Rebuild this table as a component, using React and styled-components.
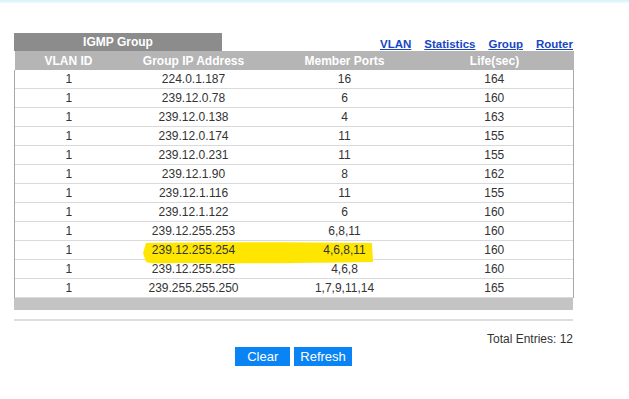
import React from 'react'
import styled, { createGlobalStyle } from 'styled-components'

const GlobalStyle = createGlobalStyle`
  html, body {
    margin: 0;
    padding: 0;
    background: #ffffff;
    font-family: "Liberation Sans", Arial, sans-serif;
  }
`

const groups = [
  ['1', '224.0.1.187', '16', '164'],
  ['1', '239.12.0.78', '6', '160'],
  ['1', '239.12.0.138', '4', '163'],
  ['1', '239.12.0.174', '11', '155'],
  ['1', '239.12.0.231', '11', '155'],
  ['1', '239.12.1.90', '8', '162'],
  ['1', '239.12.1.116', '11', '155'],
  ['1', '239.12.1.122', '6', '160'],
  ['1', '239.12.255.253', '6,8,11', '160'],
  ['1', '239.12.255.254', '4,6,8,11', '160'],
  ['1', '239.12.255.255', '4,6,8', '160'],
  ['1', '239.255.255.250', '1,7,9,11,14', '165'],
]

const links = ['VLAN', 'Statistics', 'Group', 'Router']

const TopStrip = styled.div`
  height: 3px;
  background: linear-gradient(#d2f4f8, #eefbfd);
`

const Page = styled.div`
  width: 559px;
  margin-left: 14px;
  padding-top: 30px;
`

const TabRow = styled.div`
  display: flex;
  align-items: flex-end;
  justify-content: space-between;
  height: 18px;
`

const Tab = styled.div`
  width: 208px;
  height: 18px;
  background: #8c8c8c;
  color: #ffffff;
  font-weight: bold;
  font-size: 12px;
  line-height: 18px;
  text-align: center;
`

const Links = styled.div`
  display: flex;
  gap: 13px;
  padding-bottom: 1px;
`

const NavLink = styled.a`
  color: #1846c2;
  font-size: 11.5px;
  font-weight: bold;
  text-decoration: underline;
  cursor: pointer;
`

const TableWrap = styled.div`
  position: relative;
`

const Table = styled.table`
  width: 559px;
  border-collapse: collapse;
  table-layout: fixed;
  font-size: 12px;
  color: #333333;
`

const HeadCell = styled.th`
  height: 19px;
  padding: 0 ${p => (p.$last ? '9px' : '0')} 0 0;
  background: #b5b5b5;
  color: #ffffff;
  font-weight: bold;
  text-align: center;
`

const Row = styled.tr`
  border-bottom: 1px solid #dadada;
`

const Cell = styled.td`
  height: 18px;
  padding: 0 ${p => (p.$last ? '9px' : '0')} 0 0;
  text-align: center;
  border-left: ${p => (p.$first ? '1px solid #a8a8a8' : 'none')};
  border-right: ${p => (p.$last ? '1px solid #a8a8a8' : 'none')};
`

const CellText = styled.span`
  position: relative;
  z-index: 2;
`

const Marker = styled.svg`
  position: absolute;
  left: 129px;
  top: 191px;
  z-index: 1;
  pointer-events: none;
`

const FootBar = styled.div`
  height: 12px;
  background: #c4c4c4;
`

const Rule = styled.div`
  height: 2px;
  margin-top: 9px;
  background: #dddddd;
`

const Total = styled.div`
  margin-top: 11px;
  text-align: right;
  font-size: 12px;
  line-height: 14px;
  color: #333333;
`

const Buttons = styled.div`
  display: flex;
  justify-content: center;
  gap: 4px;
  margin-top: 1px;
`

const Button = styled.button`
  height: 19px;
  padding: 0 ${p => p.$pad}px;
  border: none;
  background: #0a84f5;
  color: #ffffff;
  font-family: "Liberation Sans", Arial, sans-serif;
  font-size: 13px;
  line-height: 19px;
  cursor: pointer;
`

const App = () => {
  return (
    <>
      <GlobalStyle />
      <TopStrip />
      <Page>
        <TabRow>
          <Tab>IGMP Group</Tab>
          <Links>
            {links.map(l => <NavLink key={l}>{l}</NavLink>)}
          </Links>
        </TabRow>
        <TableWrap>
          <Table>
            <colgroup>
              <col style={{ width: 108 }} />
              <col style={{ width: 142 }} />
              <col style={{ width: 160 }} />
              <col style={{ width: 149 }} />
            </colgroup>
            <thead>
              <tr>
                <HeadCell>VLAN ID</HeadCell>
                <HeadCell>Group IP Address</HeadCell>
                <HeadCell>Member Ports</HeadCell>
                <HeadCell $last>Life(sec)</HeadCell>
              </tr>
            </thead>
            <tbody>
              {groups.map((g, i) => (
                <Row key={i}>
                  {g.map((v, j) => (
                    <Cell key={j} $first={j === 0} $last={j === 3}>
                      <CellText>{v}</CellText>
                    </Cell>
                  ))}
                </Row>
              ))}
            </tbody>
          </Table>
          <Marker width="232" height="23" viewBox="0 0 232 23">
            <path
              d="M3 1 C60 0 150 0 229 1 L230 20 C160 21 90 22 40 21 C20 21 8 22 3 20 L0 11 Z"
              fill="#ffe600"
            />
          </Marker>
        </TableWrap>
        <FootBar />
        <Rule />
        <Total>Total Entries: 12</Total>
        <Buttons>
          <Button $pad={12}>Clear</Button>
          <Button $pad={6}>Refresh</Button>
        </Buttons>
      </Page>
    </>
  )
}

export default App
